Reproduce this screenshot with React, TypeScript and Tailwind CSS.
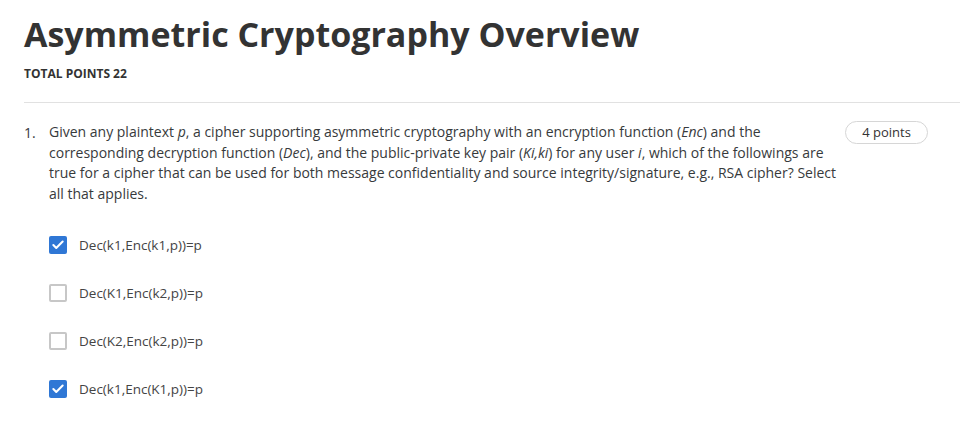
import { Check } from 'lucide-react';

const options = [
  { label: 'Dec(k1,Enc(k1,p))=p', checked: true },
  { label: 'Dec(K1,Enc(k2,p))=p', checked: false },
  { label: 'Dec(K2,Enc(k2,p))=p', checked: false },
  { label: 'Dec(k1,Enc(K1,p))=p', checked: true },
];

export default function App() {
  return (
    <div className="min-h-[440px] bg-white text-[#373a3c]" style={{ fontFamily: '"Open Sans", sans-serif' }}>
      <div className="pl-6 pr-[11px] pt-[10px]">
        <h1 className="text-[34px] font-bold leading-[48px] text-[#333]">Asymmetric Cryptography Overview</h1>
        <div className="mt-[8px] text-[12px] font-bold uppercase leading-4 text-[#333]">Total points 22</div>
        <div className="mt-[20px] h-px bg-[#e1e1e1]" />

        <div className="flex pt-[19px]">
          <div className="w-[25px] shrink-0 text-[14px] leading-[21px]">1.</div>
          <div className="flex-1">
            <div className="flex items-start">
              <p className="w-[792px] text-[14px] leading-[20.7px]">
                Given any plaintext <i>p</i>, a cipher supporting asymmetric cryptography with an encryption function (<i>Enc</i>) and the
                corresponding decryption function (<i>Dec</i>), and the public-private key pair (<i>Ki,ki</i>) for any user <i>i</i>, which of the followings are
                true for a cipher that can be used for both message confidentiality and source integrity/signature, e.g., RSA cipher? Select
                all that applies.
              </p>
              <span className="ml-auto mr-[32px] mt-[-1px] inline-flex h-[23px] w-[83px] shrink-0 items-center justify-center rounded-full border border-[#d6d6d6] text-[13px] text-[#333]">
                4 points
              </span>
            </div>

            <div className="mt-[31px] flex flex-col gap-[30px]">
              {options.map((o) => (
                <label key={o.label} className="flex h-[18px] items-center gap-[12px]">
                  {o.checked ? (
                    <span className="flex h-[18px] w-[18px] items-center justify-center rounded-[2px] bg-[#2f77d5]">
                      <Check className="h-[14px] w-[14px] text-white" strokeWidth={3.5} />
                    </span>
                  ) : (
                    <span className="h-[18px] w-[18px] rounded-[2px] border-2 border-[#c7c7c7] bg-white" />
                  )}
                  <span className="text-[13.5px] text-[#444]">{o.label}</span>
                </label>
              ))}
            </div>
          </div>
        </div>
      </div>
    </div>
  );
}
